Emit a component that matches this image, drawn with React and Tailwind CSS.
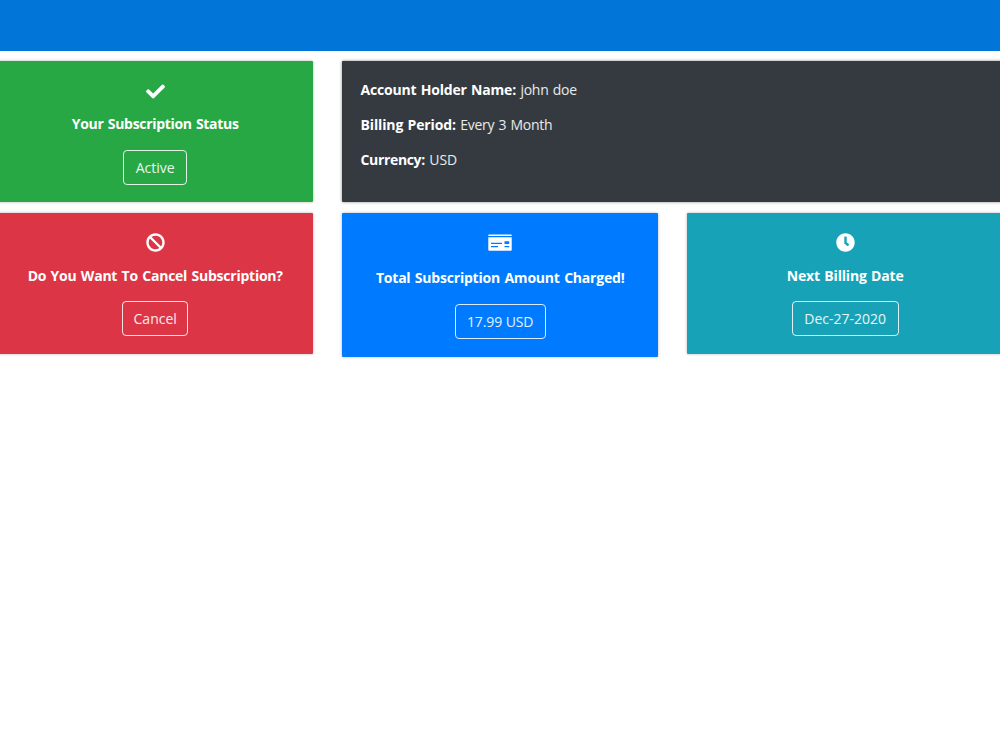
import React from "react";
import { FaCheck, FaBan, FaClock } from "react-icons/fa";

// ── Icons ───────────────────────────────────────────────────────────────────
const CardIcon = ({ className = "" }) => (
  <svg viewBox="0 0 24 17" fill="currentColor" className={className}>
    <path
      fillRule="evenodd"
      d="M1 .5h22q.7 0 .7.7V2H.3v-.8q0-.7.7-.7zM.3 3.200h23.400v12.700q0 .8-.8.8H1.100q-.8 0-.8-.8zM3 8.700v1.200h11V8.700zM3 12v1.200h7V12zM16.500 7.300v2.700h4.700V7.300zM16.500 12v1.200h4.700V12z"
    />
  </svg>
);

// ── Status card ─────────────────────────────────────────────────────────────
const StatusCard = ({ icon, title, titleClass = "", action, buttonClass = "", className = "" }) => (
  <div
    className={`flex flex-col items-center rounded-[1px] text-white shadow-[0_0_3px_rgba(0,0,0,0.3)] ${className}`}
  >
    {icon}
    <h2
      className={`whitespace-nowrap text-[14px] leading-[22px] font-bold [word-spacing:1px] ${titleClass}`}
    >
      {title}
    </h2>
    <button
      className={`h-[35px] shrink-0 whitespace-nowrap rounded-[4px] border border-white/85 pt-px text-[14px] leading-[22px] text-white/90 ${buttonClass}`}
    >
      {action}
    </button>
  </div>
);

const account = [
  {
    label: "Account Holder Name:",
    value: "john doe",
    labelClass: "tracking-[-0.18px]",
    valueClass: "tracking-[-0.25px]",
  },
  {
    label: "Billing Period:",
    value: "Every 3 Month",
    labelClass: "tracking-[-0.13px]",
    valueClass: "tracking-[-0.25px]",
  },
  {
    label: "Currency:",
    value: "USD",
    labelClass: "tracking-[-0.34px]",
    valueClass: "tracking-[-0.1px]",
  },
];

const App = () => {
  return (
    <div className="h-[750px] overflow-hidden bg-white font-['Segoe_UI','Open_Sans',sans-serif]">
      <header className="h-[51px] bg-[#0275d8]" />

      <main className="-mx-[3px] mt-[10px] grid grid-cols-[316.400px_316.400px_316.400px] items-start gap-x-[28.600px] gap-y-[11px]">
        <StatusCard
          className="h-[141px] bg-[#28a745] pt-[21px]"
          icon={<FaCheck className="mb-[12px] h-[19px] w-[19px]" />}
          title="Your Subscription Status"
          titleClass="tracking-[-0.32px]"
          action="Active"
          buttonClass="mt-[15px] w-[64px]"
        />

        {/* Account details */}
        <div className="col-span-2 h-[141px] rounded-[1px] bg-[#343a40] pt-[18px] pl-[18.500px] text-[14px] text-white shadow-[0_0_3px_rgba(0,0,0,0.5)]">
          {account.map((row) => (
            <p key={row.label} className="mb-[13px] leading-[22px] [word-spacing:0.800px]">
              <b className={row.labelClass}>{row.label}</b>{" "}
              <span className={`text-white/90 ${row.valueClass}`}>{row.value}</span>
            </p>
          ))}
        </div>

        <StatusCard
          className="h-[141px] bg-[#dc3545] pt-[20px]"
          icon={<FaBan className="mb-[13px] h-[19px] w-[19px]" />}
          title="Do You Want To Cancel Subscription?"
          titleClass="tracking-[-0.24px]"
          action="Cancel"
          buttonClass="mt-[14px] w-[66px]"
        />
        <StatusCard
          className="h-[144px] bg-[#007bff] pt-[21px]"
          icon={<CardIcon className="mb-[16px] h-[17px] w-[24px]" />}
          title="Total Subscription Amount Charged!"
          titleClass="tracking-[-0.21px]"
          action="17.99 USD"
          buttonClass="mt-[15px] w-[91px] tracking-[-0.1px]"
        />
        <StatusCard
          className="h-[141px] bg-[#17a2b8] pt-[20px]"
          icon={<FaClock className="mb-[13px] h-[19px] w-[19px]" />}
          title="Next Billing Date"
          titleClass="tracking-[-0.18px]"
          action="Dec-27-2020"
          buttonClass="mt-[14px] w-[107px]"
        />
      </main>
    </div>
  );
};

export default App;
